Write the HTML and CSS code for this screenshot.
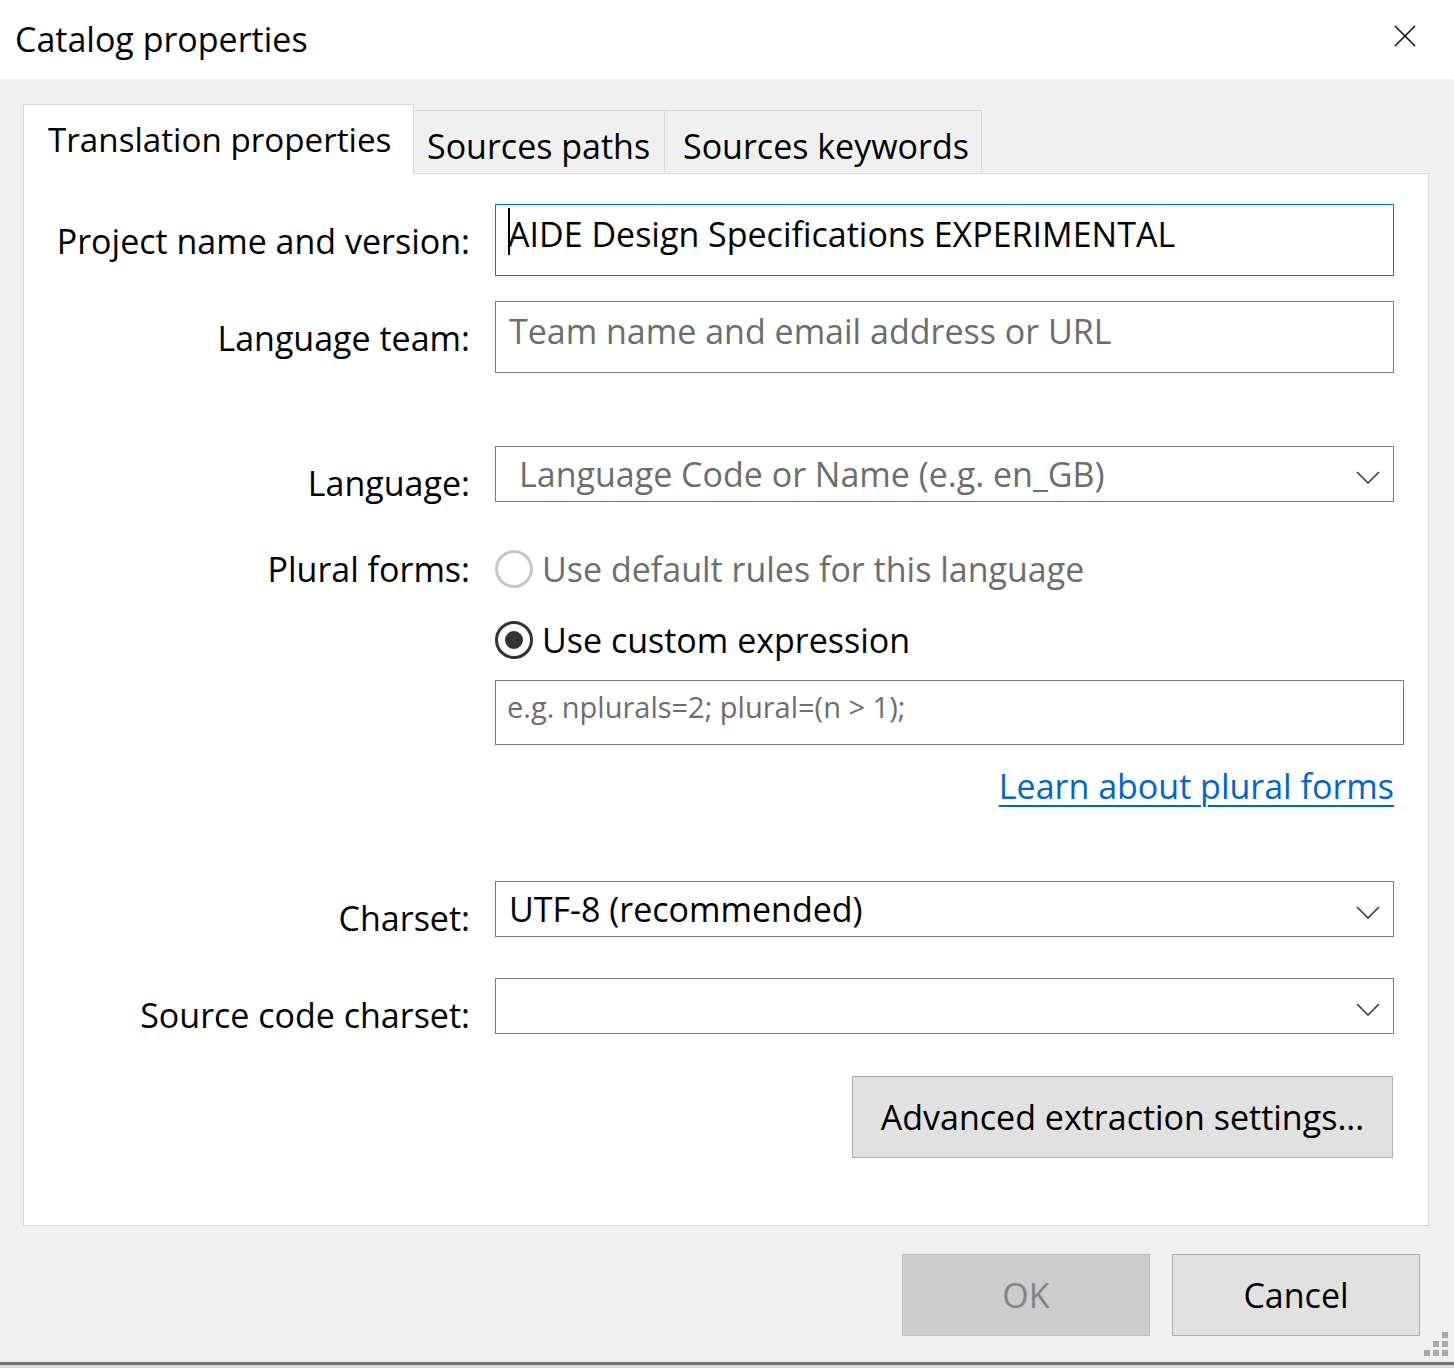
FILE: index.html
```html
<!DOCTYPE html>
<html lang="en">
<head>
<meta charset="utf-8">
<title>Catalog properties</title>
<link rel="stylesheet" href="styles.css">
</head>
<body>
<div class="window">
  <div class="titlebar">
    <span class="title">Catalog properties</span>
    <span class="close" aria-label="Close">
      <svg width="22" height="22" viewBox="0 0 22 22"><path d="M1 1 L21 21 M21 1 L1 21" stroke="#111" stroke-width="1.6" fill="none"/></svg>
    </span>
  </div>
  <div class="client">
    <div class="tabs">
      <div class="tab active">Translation properties</div>
      <div class="tab tab-paths">Sources paths</div>
      <div class="tab tab-keywords">Sources keywords</div>
    </div>
    <div class="panel">
      <div class="row row-project">
        <div class="label">Project name and version:</div>
        <div class="field focused"><span class="caret"></span>AIDE Design Specifications EXPERIMENTAL</div>
      </div>
      <div class="row row-team">
        <div class="label">Language team:</div>
        <div class="field placeholder">Team name and email address or URL</div>
      </div>
      <div class="row row-language">
        <div class="label">Language:</div>
        <div class="combo placeholder"><span class="combo-text indent">Language Code or Name (e.g. en_GB)</span>
          <svg class="chev" width="24" height="13" viewBox="0 0 24 13"><path d="M1 1 L12 12 L23 1" stroke="#333" stroke-width="1.5" fill="none"/></svg>
        </div>
      </div>
      <div class="row row-plural">
        <div class="label">Plural forms:</div>
        <div class="radio-line disabled"><span class="radio"></span><span>Use default rules for this language</span></div>
      </div>
      <div class="row row-custom">
        <div></div>
        <div class="radio-line"><span class="radio checked"><span class="dot"></span></span><span>Use custom expression</span></div>
      </div>
      <div class="row row-expr">
        <div></div>
        <div class="field small placeholder">e.g. nplurals=2; plural=(n &gt; 1);</div>
      </div>
      <div class="row row-link">
        <div></div>
        <div class="link-wrap"><a class="link" href="#">Learn about plural forms</a></div>
      </div>
      <div class="row row-charset">
        <div class="label">Charset:</div>
        <div class="combo"><span class="combo-text">UTF-8 (recommended)</span>
          <svg class="chev" width="24" height="13" viewBox="0 0 24 13"><path d="M1 1 L12 12 L23 1" stroke="#333" stroke-width="1.5" fill="none"/></svg>
        </div>
      </div>
      <div class="row row-source">
        <div class="label">Source code charset:</div>
        <div class="combo"><span class="combo-text"></span>
          <svg class="chev" width="24" height="13" viewBox="0 0 24 13"><path d="M1 1 L12 12 L23 1" stroke="#333" stroke-width="1.5" fill="none"/></svg>
        </div>
      </div>
      <div class="row row-adv">
        <div></div>
        <div class="adv-wrap"><div class="btn adv">Advanced extraction settings...</div></div>
      </div>
    </div>
    <div class="buttons">
      <div class="btn ok">OK</div>
      <div class="btn cancel">Cancel</div>
    </div>
    <div class="grip">
      <span></span><span></span><span></span>
      <span></span><span></span><span></span>
      <span></span><span></span><span></span>
    </div>
  </div>
  <div class="edge"></div>
</div>
</body>
</html>
```
FILE: styles.css
```css
* { box-sizing: border-box; }
html, body { margin: 0; padding: 0; }
body {
  font-family: "Open Sans", "Noto Sans", "DejaVu Sans", sans-serif;
  font-size: 34px;
  line-height: 46px;
  color: #000;
  background: #f0f0f0;
}
.window { width: 1454px; height: 1368px; display: flex; flex-direction: column; }

.titlebar {
  height: 79px;
  background: #fff;
  display: flex;
  align-items: flex-start;
  justify-content: space-between;
  padding: 16px 0 0 15px;
}
.title { font-size: 34px; }
.close { margin: 9px 38px 0 0; display: block; height: 22px; }
.close svg { display: block; }

.client {
  position: relative;
  height: 1283px;
  background: #f0f0f0;
  padding: 25px 25px 0 23px;
}

.tabs { display: flex; align-items: flex-end; height: 69px; }
.tab {
  height: 63px;
  padding: 12px 0 0 14px;
  border: 1px solid #d9d9d9;
  border-bottom: none;
  border-left: none;
  background: #f0f0f0;
  white-space: nowrap;
  overflow: hidden;
}
.tab.active {
  width: 391px;
  height: 70px;
  margin-bottom: -1px;
  padding: 12px 0 0 24px;
  background: #fff;
  border-left: 1px solid #d9d9d9;
  position: relative;
  z-index: 1;
  font-size: 33.2px;
}
.tab-paths { width: 251px; padding-left: 13px; }
.tab-keywords { width: 317px; padding-left: 18px; }

.panel {
  height: 1053px;
  background: #fff;
  border: 1px solid #d9d9d9;
  padding: 30px 34px 0 0;
  display: flex;
  flex-direction: column;
}

.row {
  display: grid;
  grid-template-columns: 446px 1fr;
  column-gap: 25px;
  align-items: start;
}
.label { text-align: right; white-space: nowrap; padding-top: 14px; }

.field {
  height: 72px;
  border: 1px solid #7a7a7a;
  padding: 6px 13px 0 13px;
  white-space: nowrap;
  background: #fff;
}
.field.focused { border-color: #0078d7; }
.caret {
  display: inline-block;
  width: 2px;
  height: 47px;
  background: #000;
  vertical-align: top;
  margin: -3px -2px 0 -1px;
}
.placeholder { color: #6d6d6d; }

.row-team { margin-top: 25px; }
.row-language { margin-top: 73px; }

.combo {
  height: 56px;
  border: 1px solid #7a7a7a;
  padding: 4px 13px 0 13px;
  display: flex;
  justify-content: space-between;
  align-items: flex-start;
  background: #fff;
}
.combo-text { white-space: nowrap; }
.combo-text.indent { padding-left: 10px; }
.chev { margin-top: 20px; display: block; }

.row-plural { margin-top: 40px; align-items: center; }
.row-plural .label { padding-top: 0; }
.row-custom { margin-top: 29px; }
.radio-line {
  display: flex;
  align-items: center;
  gap: 9px;
  height: 38px;
  white-space: nowrap;
}
.radio-line.disabled { color: #6d6d6d; }
.radio {
  width: 38px;
  height: 38px;
  border-radius: 50%;
  border: 3px solid #333;
  display: flex;
  align-items: center;
  justify-content: center;
  flex: none;
}
.disabled .radio { border-color: #c6c6c6; }
.dot { width: 18px; height: 18px; border-radius: 50%; background: #333; }

.row-expr { margin-top: 21px; }
.field.small {
  height: 65px;
  margin-right: -10px;
  font-size: 29px;
  line-height: 38px;
  padding: 7px 11px 0 11px;
}

.row-link { margin-top: 18px; }
.link-wrap { text-align: right; }
.link { color: #0066cc; text-decoration: underline; text-underline-offset: 6px; text-decoration-thickness: 2px; }

.row-charset { margin-top: 72px; }
.row-source { margin-top: 37px; }

.row-adv { margin-top: 38px; }
.adv-wrap { display: flex; justify-content: flex-end; }
.btn {
  height: 82px;
  background: #e1e1e1;
  border: 1px solid #adadad;
  display: flex;
  align-items: center;
  justify-content: center;
  white-space: nowrap;
}
.adv { width: 541px; margin-right: 1px; }

.buttons {
  display: flex;
  justify-content: flex-end;
  gap: 22px;
  margin-top: 28px;
  padding-right: 9px;
}
.buttons .btn { width: 248px; }
.btn.ok { background: #cccccc; border-color: #bfbfbf; color: #838383; }

.grip {
  position: absolute;
  right: 6px;
  bottom: 6px;
  width: 24px;
  height: 24px;
  display: grid;
  grid-template-columns: repeat(3, 6px);
  grid-template-rows: repeat(3, 6px);
  gap: 3px;
}
.grip span { background: #a8a8a8; }
.grip span:nth-child(1), .grip span:nth-child(2), .grip span:nth-child(4) { background: transparent; }

.edge {
  height: 6px;
  border-top: 3px solid #707070;
  background: #dcdcdc;
}
```
